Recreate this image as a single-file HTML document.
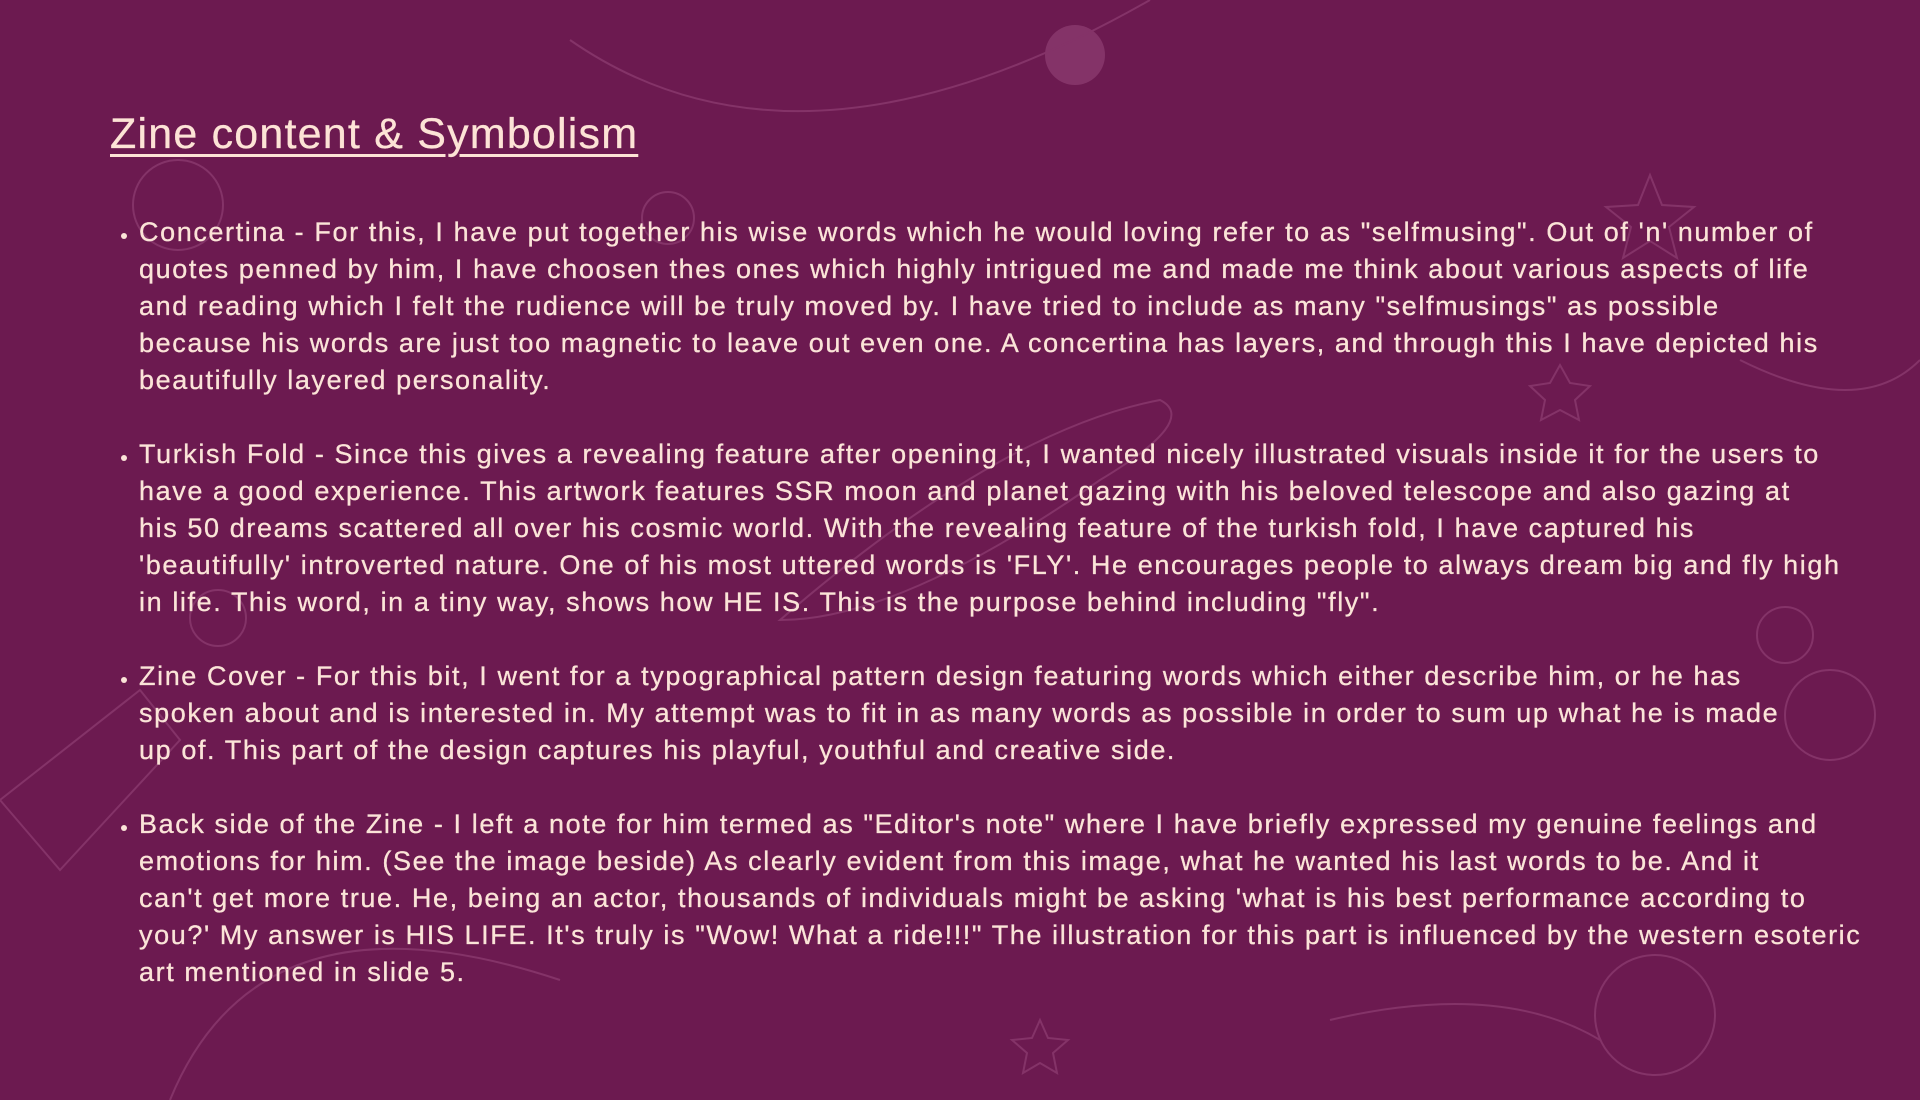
<!DOCTYPE html>
<html><head><meta charset="utf-8"><style>
html,body{margin:0;padding:0;}
body{width:1920px;height:1100px;background:#6c1a50;position:relative;overflow:hidden;font-family:"Liberation Sans",sans-serif;color:#fbe4d8;}
.bg{position:absolute;left:0;top:0;}
h1{position:absolute;left:110px;top:110px;margin:0;font-size:43px;font-weight:normal;text-decoration:underline;text-decoration-thickness:3px;text-underline-offset:6px;letter-spacing:1.2px;color:#fde3d6;-webkit-text-stroke:0.3px #fde3d6;}
ul{position:absolute;left:110px;top:214px;margin:0;padding:0 0 0 29px;font-size:27px;line-height:37px;letter-spacing:1.6px;white-space:nowrap;-webkit-text-stroke:0.3px #fbe4d8;}
li{margin-bottom:37px;}
li::marker{font-size:20px;}
</style></head><body>
<svg class="bg" width="1920" height="1100" fill="none" stroke="#8a3a6e" stroke-width="2" opacity="0.8">
<circle cx="1075" cy="55" r="30" fill="#8a3a6e" stroke="none"/>
<path d="M570 40 Q800 200 1150 0"/>
<circle cx="178" cy="205" r="45"/>
<circle cx="668" cy="218" r="26"/>
<circle cx="218" cy="618" r="28"/>
<circle cx="1830" cy="715" r="45"/>
<circle cx="1785" cy="635" r="28"/>
<circle cx="1655" cy="1015" r="60"/>
<path d="M1650 175 l12 30 32 2 -25 20 8 31 -27 -17 -27 17 8 -31 -25 -20 32 -2z"/>
<path d="M1560 365 l10 18 20 3 -15 14 4 20 -19 -10 -19 10 4 -20 -15 -14 20 -3z"/>
<path d="M1040 1020 l8 18 20 2 -15 13 4 20 -17 -10 -17 10 4 -20 -15 -13 20 -2z"/>
<path d="M0 800 L140 690 L180 740 L60 870z"/>
<path d="M1330 1020 Q1500 980 1600 1040"/>
<path d="M780 620 Q1000 430 1160 400 Q1200 420 1100 480 Q900 620 780 620z"/>
<path d="M1740 360 Q1860 420 1920 360"/>
<path d="M170 1100 Q260 880 560 980"/>
</svg>
<h1>Zine content &amp; Symbolism</h1>
<ul>
<li>Concertina - For this, I have put together his wise words which he would loving refer to as "selfmusing". Out of 'n' number of<br>quotes penned by him, I have choosen thes ones which highly intrigued me and made me think about various aspects of life<br>and reading which I felt the rudience will be truly moved by. I have tried to include as many "selfmusings" as possible<br>because his words are just too magnetic to leave out even one. A concertina has layers, and through this I have depicted his<br>beautifully layered personality.</li>
<li>Turkish Fold - Since this gives a revealing feature after opening it, I wanted nicely illustrated visuals inside it for the users to<br>have a good experience. This artwork features SSR moon and planet gazing with his beloved telescope and also gazing at<br>his 50 dreams scattered all over his cosmic world. With the revealing feature of the turkish fold, I have captured his<br>'beautifully' introverted nature. One of his most uttered words is 'FLY'. He encourages people to always dream big and fly high<br>in life. This word, in a tiny way, shows how HE IS. This is the purpose behind including "fly".</li>
<li>Zine Cover - For this bit, I went for a typographical pattern design featuring words which either describe him, or he has<br>spoken about and is interested in. My attempt was to fit in as many words as possible in order to sum up what he is made<br>up of. This part of the design captures his playful, youthful and creative side.</li>
<li>Back side of the Zine - I left a note for him termed as "Editor's note" where I have briefly expressed my genuine feelings and<br>emotions for him. (See the image beside) As clearly evident from this image, what he wanted his last words to be. And it<br>can't get more true. He, being an actor, thousands of individuals might be asking 'what is his best performance according to<br>you?' My answer is HIS LIFE. It's truly is "Wow! What a ride!!!" The illustration for this part is influenced by the western esoteric<br>art mentioned in slide 5.</li>
</ul>
</body></html>
